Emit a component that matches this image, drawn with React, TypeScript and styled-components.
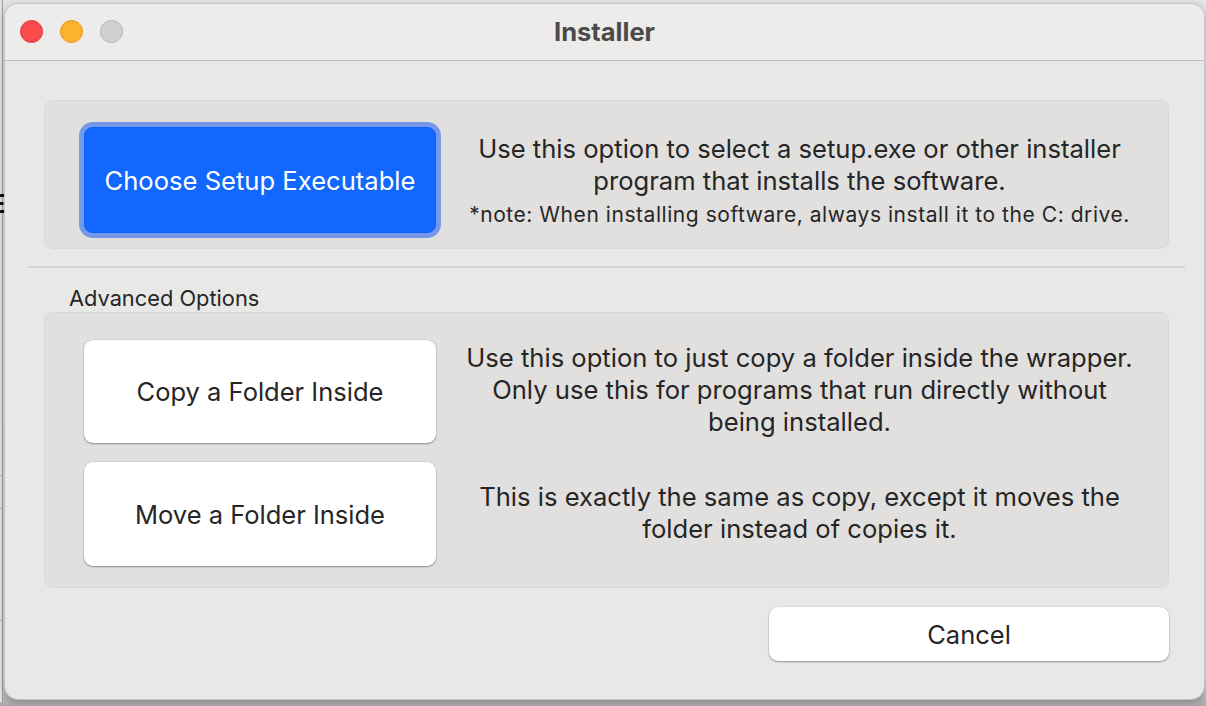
import React from "react";
import styled, { createGlobalStyle } from "styled-components";

const GlobalStyle = createGlobalStyle`
  html, body { margin: 0; padding: 0; width: 1206px; height: 706px; overflow: hidden; }
  body { font-family: Inter, "Noto Sans", "Liberation Sans", sans-serif; -webkit-font-smoothing: antialiased; }
  * { box-sizing: border-box; }
`;

const Desktop = styled.div`
  position: relative;
  width: 1206px;
  height: 706px;
  background: linear-gradient(to bottom, #e4e4e4 0%, #dcdcdc 96%, #a9a9a9 100%);
  overflow: hidden;
`;

const BackWindow = styled.div`
  position: absolute;
  left: -300px;
  top: -10px;
  width: 303px;
  height: 712px;
  background: #e2e2e2;
  border-right: 1px solid #9d9d9d;
`;

const BackLetter = styled.span`
  position: absolute;
  right: -4px;
  top: 198px;
  font: 700 28px "Liberation Sans", sans-serif;
  color: #111;
`;

const BackLine = styled.div`
  position: absolute;
  left: 0;
  right: 0;
  height: 1px;
  background: #b4b4b4;
`;

const Window = styled.div`
  position: absolute;
  left: 4px;
  top: 3px;
  width: 1201px;
  height: 697px;
  border-radius: 14px;
  background: #e8e8e7;
  border: 1px solid #c4c4c4;
  box-shadow: 0 2px 6px rgba(0, 0, 0, 0.25);
  overflow: hidden;
  display: flex;
  flex-direction: column;
`;

const TitleBar = styled.div`
  position: relative;
  height: 57px;
  flex: none;
  background: #edecea;
  border-bottom: 1px solid #c2c1c0;
  display: flex;
  align-items: center;
  justify-content: center;
`;

const Lights = styled.div`
  position: absolute;
  left: 15px;
  top: 16px;
  display: flex;
  gap: 17px;
`;

const Light = styled.span<{ $bg: string; $bd: string }>`
  width: 23px;
  height: 23px;
  border-radius: 50%;
  background: ${(p) => p.$bg};
  border: 1px solid ${(p) => p.$bd};
`;

const Title = styled.div`
  font-size: 25.5px;
  font-weight: 700;
  color: #4a4a4a;
  margin-top: -2px;
`;

const Content = styled.div`
  flex: 1;
  display: flex;
  flex-direction: column;
  padding: 39px 35px 0 39px;
  color: #262626;
`;

const Panel = styled.div<{ $pad: string }>`
  background: #e1e0df;
  border: 1px solid #d9d8d7;
  border-radius: 9px;
  padding: ${(p) => p.$pad};
  display: flex;
  flex-direction: column;
  gap: 19px;
`;

const Row = styled.div<{ $align: string }>`
  display: flex;
  align-items: ${(p) => p.$align};
`;

const PrimaryButton = styled.button`
  flex: none;
  width: 352px;
  height: 106px;
  border: none;
  border-radius: 9px;
  background: #1167fe;
  box-shadow: 0 0 0 5px #7499e9, inset 0 0 0 1px #0c5ef0;
  color: #fff;
  font-family: inherit;
  font-size: 25.6px;
  font-weight: 400;
`;

const WhiteButton = styled.button<{ $w: number; $h: number }>`
  flex: none;
  width: ${(p) => p.$w}px;
  height: ${(p) => p.$h}px;
  border: none;
  border-radius: 9px;
  background: #ffffff;
  box-shadow: 0 0 0 0.5px rgba(0, 0, 0, 0.08), 0 1px 2px rgba(0, 0, 0, 0.35);
  color: #262626;
  font-family: inherit;
  font-size: 25.5px;
  font-weight: 400;
`;

const Description = styled.div<{ $top: number }>`
  flex: 1;
  margin-top: ${(p) => p.$top}px;
  padding: 0 17px 0 12px;
  text-align: center;
  font-size: 25.6px;
  line-height: 32px;
  white-space: nowrap;
`;

const Note = styled.div`
  font-size: 21px;
  letter-spacing: 0.55px;
  line-height: 30px;
  margin-top: 3px;
`;

const Separator = styled.div`
  height: 2px;
  background: #d3d3d2;
  margin: 17px -16px 0 -16px;
`;

const GroupLabel = styled.div`
  font-size: 21.8px;
  line-height: 26px;
  margin: 17px 0 1px 25px;
`;

const Footer = styled.div`
  display: flex;
  justify-content: flex-end;
  margin-top: 19px;
`;

export default function App() {
  return (
    <>
      <GlobalStyle />
      <Desktop>
        <BackWindow>
          <BackLetter>E</BackLetter>
          <BackLine style={{ top: 485 }} />
          <BackLine style={{ top: 518 }} />
          <BackLine style={{ top: 630 }} />
        </BackWindow>
        <Window>
          <TitleBar>
            <Lights>
              <Light $bg="#fb4a4e" $bd="#de383c" />
              <Light $bg="#fdb22b" $bd="#df961d" />
              <Light $bg="#d1d0ce" $bd="#b4b3b1" />
            </Lights>
            <Title>Installer</Title>
          </TitleBar>
          <Content>
            <Panel $pad="26px 0 15px 39px">
              <Row $align="flex-start">
                <PrimaryButton>Choose Setup Executable</PrimaryButton>
                <Description $top={6}>
                  Use this option to select a setup.exe or other installer
                  <br />
                  program that installs the software.
                  <Note>*note: When installing software, always install it to the C: drive.</Note>
                </Description>
              </Row>
            </Panel>
            <Separator />
            <GroupLabel>Advanced Options</GroupLabel>
            <Panel $pad="27px 0 21px 39px">
              <Row $align="center">
                <WhiteButton $w={352} $h={103}>Copy a Folder Inside</WhiteButton>
                <Description $top={-4}>
                  Use this option to just copy a folder inside the wrapper.
                  <br />
                  Only use this for programs that run directly without
                  <br />
                  being installed.
                </Description>
              </Row>
              <Row $align="center">
                <WhiteButton $w={352} $h={104}>Move a Folder Inside</WhiteButton>
                <Description $top={-2}>
                  This is exactly the same as copy, except it moves the
                  <br />
                  folder instead of copies it.
                </Description>
              </Row>
            </Panel>
            <Footer>
              <WhiteButton $w={400} $h={54}>Cancel</WhiteButton>
            </Footer>
          </Content>
        </Window>
      </Desktop>
    </>
  );
}
